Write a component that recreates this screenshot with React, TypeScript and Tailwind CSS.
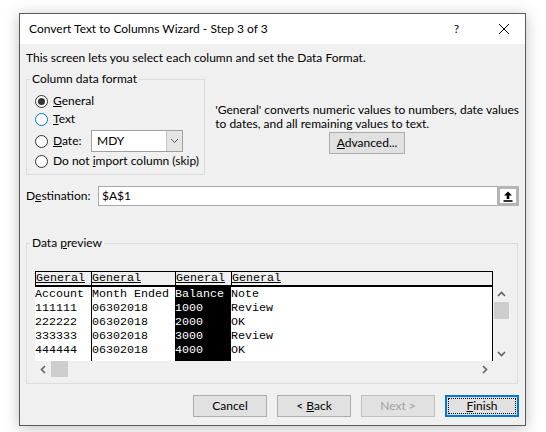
import React from "react";

const UI = "font-['Lato',sans-serif] text-[12px] text-black";
const MONO = "font-['Liberation_Mono',monospace] text-[11.67px] leading-[14px]";

const ROWS = [
  ["Account", "Month Ended", "Balance", "Note"],
  ["111111", "06302018", "1000", "Review"],
  ["222222", "06302018", "2000", "OK"],
  ["333333", "06302018", "3000", "Review"],
  ["444444", "06302018", "4000", "OK"],
];

function Radio({ checked, focus }: { checked?: boolean; focus?: boolean }) {
  return (
    <span
      className={
        "w-[13px] h-[13px] rounded-full border bg-white flex items-center justify-center shrink-0 " +
        (focus ? "border-[#0078d7]" : "border-[#333]")
      }
    >
      {checked && <span className="w-[7px] h-[7px] rounded-full bg-[#333]" />}
    </span>
  );
}

function Btn({ children, disabled }: { children: React.ReactNode; disabled?: boolean }) {
  return (
    <button
      className={
        "w-[74px] h-[22px] border bg-[#e1e1e1] flex items-center justify-center leading-none " +
        (disabled ? "border-[#bfbfbf] text-[#a0a0a0]" : "border-[#adadad]")
      }
    >
      <span>{children}</span>
    </button>
  );
}

function Chevron({ dir }: { dir: "up" | "down" | "left" | "right" }) {
  const d = {
    up: "M1 6 L4.5 2.5 L8 6",
    down: "M1 3 L4.5 6.5 L8 3",
    left: "M6 1 L2.5 4.5 L6 8",
    right: "M3 1 L6.5 4.5 L3 8",
  }[dir];
  return (
    <svg width="9" height="9" viewBox="0 0 9 9">
      <path d={d} fill="none" stroke="#606060" strokeWidth="1.6" />
    </svg>
  );
}

export default function App() {
  return (
    <div className={"min-h-screen bg-white pt-[13px] pl-[19px] " + UI}>
      <div className="w-[507px] h-[413px] border border-[#5a5a5a] bg-[#f0f0f0] shadow-[0_2px_14px_rgba(0,0,0,0.25)] flex flex-col">
        {/* title bar */}
        <div className="h-[30px] bg-white flex items-center pl-[9px] pr-[16px] shrink-0">
          <span className="flex-1">Convert Text to Columns Wizard - Step 3 of 3</span>
          <span className="mr-[40px]">?</span>
          <svg width="10" height="10" viewBox="0 0 10 10">
            <path d="M0 0 L10 10 M10 0 L0 10" stroke="#000" strokeWidth="1" />
          </svg>
        </div>

        <div className="flex flex-col px-[6px]">
          <div className="mt-[7px] leading-[14px]">
            This screen lets you select each column and set the Data Format.
          </div>

          <div className="flex mt-[7px] h-[103px]">
            <fieldset className="w-[181px] h-[103px] border border-[#dcdcdc]">
              <legend className="ml-[3px] px-[2px] leading-[14px]">Column data format</legend>
              <div className="flex flex-col pt-[6px] pl-[8px]">
                <div className="h-[18px] flex items-center gap-[5px]">
                  <Radio checked />
                  <span><u>G</u>eneral</span>
                </div>
                <div className="h-[18px] flex items-center gap-[5px]">
                  <Radio focus />
                  <span><u>T</u>ext</span>
                </div>
                <div className="h-[22px] mt-[2px] flex items-center gap-[5px]">
                  <Radio />
                  <span className="w-[33px]"><u>D</u>ate:</span>
                  <div className="w-[92px] h-[22px] border border-[#a0a0a0] bg-white flex">
                    <span className="flex-1 pl-[5px] flex items-center">MDY</span>
                    <span className="w-[16px] bg-[#e5e5e5] border-l border-[#c4c4c4] flex items-center justify-center">
                      <svg width="9" height="6" viewBox="0 0 9 6">
                        <path d="M1 1 L4.5 4.5 L8 1" fill="none" stroke="#555" strokeWidth="1" />
                      </svg>
                    </span>
                  </div>
                </div>
                <div className="h-[18px] flex items-center gap-[5px] whitespace-nowrap">
                  <Radio />
                  <span>Do not <u>i</u>mport column (skip)</span>
                </div>
              </div>
            </fieldset>

            <div className="pl-[10px] pt-[31px]">
              <div className="flex flex-col items-center w-fit">
                <div className="leading-[14px] whitespace-nowrap">
                  <div>'General' converts numeric values to numbers, date values</div>
                  <div>to dates, and all remaining values to text.</div>
                </div>
                <div className="mt-[1px]">
                  <button className="w-[76px] h-[22px] border border-[#adadad] bg-[#e1e1e1] leading-none">
                    <u>A</u>dvanced...
                  </button>
                </div>
              </div>
            </div>
          </div>

          <div className="flex items-center mt-[11px] h-[20px]">
            <span className="w-[72px]">D<u>e</u>stination:</span>
            <div className="w-[421px] h-[20px] border border-[#a9a9a9] bg-white flex">
              <span className="flex-1 pl-[3px] flex items-center">$A$1</span>
              <span className="w-[22px] h-[20px] -mt-[1px] -mr-[1px] border-[3px] border-[#b4b4b4] bg-white flex items-center justify-center">
                <svg width="10" height="11" viewBox="0 0 10 11">
                  <path d="M5 0.5 L9 4.5 L6.3 4.5 L6.3 8 L3.7 8 L3.7 4.5 L1 4.5 Z" fill="#000" />
                  <rect x="0.5" y="9.2" width="9" height="1.6" fill="#000" />
                </svg>
              </span>
            </div>
          </div>

          <fieldset className="w-[492px] h-[148px] mt-[30px] border border-[#dcdcdc]">
            <legend className="ml-[3px] px-[2px] leading-[14px]">Data <u>p</u>review</legend>
            <div className="flex pt-[21px] pl-[8px]">
              <div className="flex flex-col w-[458px]">
                <div className={"flex h-[16px] border border-b-2 border-black bg-[#f0f0f0] " + MONO}>
                  <span className="w-[55px] leading-[13px] underline">General</span>
                  <span className="w-[84px] border-l border-black leading-[13px] underline">General</span>
                  <span className="w-[56px] border-l border-black leading-[13px] underline">General</span>
                  <span className="flex-1 border-l border-black leading-[13px] underline">General</span>
                </div>
                <div className={"flex h-[74px] bg-white border-r border-black " + MONO}>
                  <div className="w-[56px] whitespace-pre">
                    {ROWS.map((r) => <div key={r[0]}>{r[0]}</div>)}
                  </div>
                  <div className="w-[84px] border-l border-black whitespace-pre">
                    {ROWS.map((r) => <div key={r[0]}>{r[1]}</div>)}
                  </div>
                  <div className="w-[56px] bg-black text-white whitespace-pre">
                    {ROWS.map((r) => <div key={r[0]}>{r[2]}</div>)}
                  </div>
                  <div className="flex-1 whitespace-pre">
                    {ROWS.map((r) => <div key={r[0]}>{r[3]}</div>)}
                  </div>
                </div>
                <div className="h-[16px] flex items-center">
                  <span className="w-[16px] flex justify-center"><Chevron dir="left" /></span>
                  <span className="w-[17px] h-[16px] bg-[#cdcdcd]" />
                  <span className="flex-1" />
                  <span className="w-[16px] flex justify-center mr-[1px]"><Chevron dir="right" /></span>
                </div>
              </div>
              <div className="w-[17px] mt-[16px] h-[74px] flex flex-col items-center">
                <span className="h-[15px] flex items-center"><Chevron dir="up" /></span>
                <span className="w-[15px] h-[17px] bg-[#cdcdcd]" />
                <span className="flex-1" />
                <span className="h-[15px] flex items-center"><Chevron dir="down" /></span>
              </div>
            </div>
          </fieldset>

          <div className="flex justify-end gap-[10px] mt-[11px]">
            <Btn>Cancel</Btn>
            <Btn>&lt; <u>B</u>ack</Btn>
            <Btn disabled>Next &gt;</Btn>
            <button className="w-[74px] h-[22px] border-2 border-[#0078d7] bg-[#e1e1e1] p-[1px]">
              <span className="w-full h-full flex items-center justify-center border border-dotted border-black leading-none">
                <span><u>F</u>inish</span>
              </span>
            </button>
          </div>
        </div>
      </div>
    </div>
  );
}
